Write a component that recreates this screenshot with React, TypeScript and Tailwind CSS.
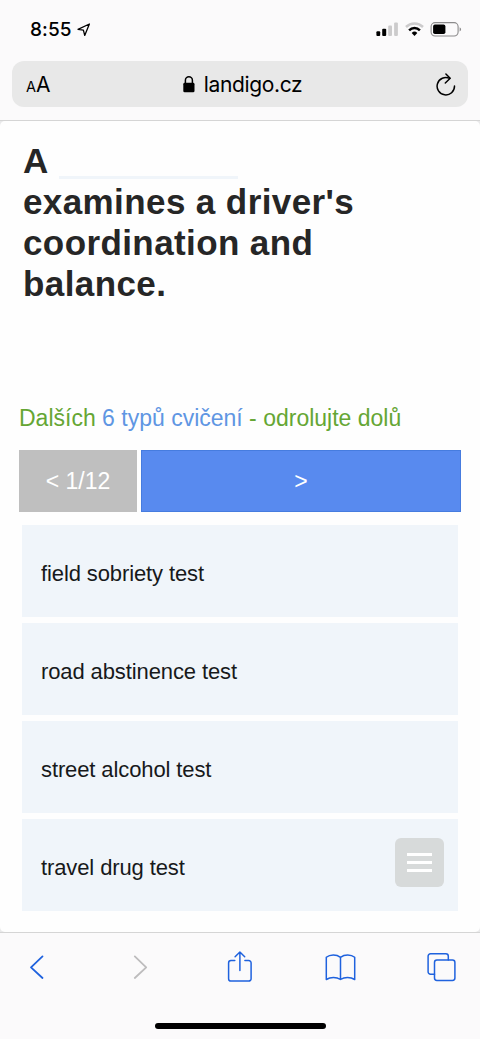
import { ReactNode } from "react";
import { clsx } from "clsx";

const answers = [
  "field sobriety test",
  "road abstinence test",
  "street alcohol test",
  "travel drug test",
];

function StatusBar() {
  return (
    <div className="flex h-[61px] items-start justify-between pl-[30px] pr-[18px] text-black">
      <div className="flex items-center pt-[18px]">
        <span className="w-[44px] text-[19px] leading-[24px] font-medium tracking-[0.1px]">
          8:55
        </span>
        <svg
          className="ml-[3px]"
          width="14"
          height="14"
          viewBox="0 0 14 14"
          fill="none"
          stroke="currentColor"
          strokeWidth="1.3"
          strokeLinejoin="round"
        >
          <path d="M12.4 1 1 6.3 6.4 7.1 7.7 12.4Z" />
        </svg>
      </div>
      <div className="flex pt-[21px]">
        <svg width="23" height="16" viewBox="0 0 23 16">
          <rect x="0.4" y="10.2" width="3.8" height="4.8" rx="1" />
          <rect x="6.2" y="7.8" width="4" height="7.2" rx="1" />
          <rect x="12.2" y="4.6" width="3.8" height="10.4" rx="1" fill="#cccbcc" />
          <rect x="18.1" y="1.6" width="3.8" height="13.4" rx="1" fill="#cccbcc" />
        </svg>
        <svg
          className="ml-[6px]"
          width="19"
          height="16"
          viewBox="0 0 19 16"
          fill="none"
          strokeWidth="2.5"
        >
          <path d="M1 6a12.2 12.2 0 0 1 17 0" stroke="#cccbcc" />
          <path d="M4.1 9.3a7.7 7.7 0 0 1 10.8 0" stroke="#000" />
          <path d="M6.7 11.9a4 4 0 0 1 5.6 0L9.5 14.9Z" fill="#000" />
        </svg>
        <svg className="ml-[6px]" width="32" height="16" viewBox="0 0 32 16" fill="none">
          <rect x="1.1" y="1.6" width="27" height="13.4" rx="4" stroke="#8b8a8b" strokeWidth="1.1" />
          <rect x="3.1" y="3.6" width="12.3" height="9.5" rx="1.8" fill="#000" />
          <path d="M29.6 6.2c2 .8 2 3.4 0 4.2Z" fill="#8b8a8b" />
        </svg>
      </div>
    </div>
  );
}

function AddressBar() {
  return (
    <div className="mx-[12px] flex h-[46px] items-center justify-between rounded-[12px] bg-[#e8e8e8] pr-[12px] pl-[14px] text-black">
      <div className="flex w-[23px] items-baseline pt-[1px] leading-none">
        <span className="text-[14.5px]">A</span>
        <span className="text-[21px]">A</span>
      </div>
      <div className="flex items-center">
        <svg width="12" height="18" viewBox="0 0 12 18">
          <rect x="0.3" y="7.8" width="11.2" height="9.5" rx="1.4" />
          <path
            d="M2.4 8.5V5.2a3.5 3.5 0 0 1 7 0V8.5"
            fill="none"
            stroke="currentColor"
            strokeWidth="1.5"
          />
        </svg>
        <span className="ml-[9px] pt-[2px] text-[21px] leading-[26px] tracking-[-0.35px]">
          landigo.cz
        </span>
      </div>
      <svg
        width="20"
        height="24"
        viewBox="0 0 20 24"
        fill="none"
        stroke="currentColor"
        strokeWidth="1.5"
        strokeLinecap="round"
        strokeLinejoin="round"
      >
        <path d="M18.5 14A8.7 8.7 0 1 1 13.6 6.4" />
        <path d="M9.9 2 14.2 6.3 9.3 11" />
      </svg>
    </div>
  );
}

function ToolIcon({
  width,
  className,
  children,
}: {
  width: number;
  className?: string;
  children: ReactNode;
}) {
  return (
    <svg
      className={clsx("shrink-0", className)}
      width={width}
      height="34"
      viewBox={`0 0 ${width} 34`}
      fill="none"
      stroke="currentColor"
      strokeWidth="1.5"
      strokeLinecap="round"
      strokeLinejoin="round"
    >
      {children}
    </svg>
  );
}

function Toolbar() {
  return (
    <div className="flex h-[107px] flex-col items-center border-t border-[#d5d5d5] bg-[#fbfafb]">
      <div className="flex w-full items-center pt-[17px] pl-[29px] text-[#1f62de]">
        <ToolIcon width={16}>
          <path d="M13.5 6.4 2 17.3 13.5 28" strokeWidth="1.8" />
        </ToolIcon>
        <ToolIcon width={16} className="ml-[87px] text-[#bdbcbd]">
          <path d="M2.8 6.4 14.2 17.3 2.8 28" strokeWidth="1.8" />
        </ToolIcon>
        <ToolIcon width={26} className="ml-[79px]">
          <path d="M7.8 10.6H4a2.4 2.4 0 0 0-2.4 2.4V28.7a2.4 2.4 0 0 0 2.4 2.4H21.7a2.4 2.4 0 0 0 2.4-2.4V13a2.4 2.4 0 0 0-2.4-2.4h-3.8" />
          <path d="M12.9 20.4V2M8.1 6.8l4.8-4.8 4.8 4.8" />
        </ToolIcon>
        <ToolIcon width={32} className="ml-[71px]">
          <path d="M16.5 7.3C12.5 4.2 6 4.2 2.3 7.3V29.5C6.500 26.800 12.500 26.800 16.500 29.500C20.500 26.800 26.500 26.800 30.700 29.500V7.300C27 4.200 20.500 4.200 16.500 7.300V29.500" />
        </ToolIcon>
        <ToolIcon width={30} className="ml-[71px]">
          <path d="M7.500 24.200H3.500a2.400 2.400 0 0 1-2.400-2.400V6.200a2.400 2.400 0 0 1 2.400-2.400H18.900a2.400 2.400 0 0 1 2.400 2.400V10" />
          <rect x="7.500" y="10" width="20.400" height="20.400" rx="2.400" />
        </ToolIcon>
      </div>
      <div className="mt-[38.5px] h-[6px] w-[171px] rounded-full bg-black" />
    </div>
  );
}

function Exercise() {
  return (
    <main className="h-[811px] overflow-hidden rounded-[5px] bg-[#fefefe] font-['Liberation_Sans',Arial,sans-serif]">
      <h1 className="h-[276px] pt-[19px] pl-[23px] text-[35px] leading-[41px] font-bold tracking-[0.4px] text-[#262626]">
        <span className="flex">
          A
          <span className="mt-[36px] ml-[10px] h-[3px] w-[179px] bg-[#f0f5fa]" />
        </span>
        <span className="block">examines a driver's</span>
        <span className="block">coordination and</span>
        <span className="block">balance.</span>
      </h1>
      <p className="h-[53px] pt-[7px] pl-[19px] text-[23px] leading-[28px] whitespace-nowrap text-[#65a634]">
        Dalších <span className="text-[#5f96e3]">6 typů cvičení</span> - odrolujte dolů
      </p>
      <div className="flex h-[62px] gap-[4px] px-[19px] text-[23px] text-white">
        <button className="w-[118px] bg-[#bfbfbf]">&lt; 1/12</button>
        <button className="flex-1 border border-[#467cdf] bg-[#588aef]">&gt;</button>
      </div>
      <ul className="mt-[13px] flex flex-col gap-[6px] px-[22px]">
        {answers.map((answer, i) => (
          <li
            key={answer}
            className="flex h-[92px] items-center justify-between bg-[#f0f5fa] pt-[5px] pr-[14px] pl-[19px] text-[22px] tracking-[-0.11px] text-[#17191b]"
          >
            {answer}
            {i === answers.length - 1 && (
              <button className="mt-[-11px] flex h-[49px] w-[49px] flex-col items-center justify-center gap-[5px] rounded-[6px] bg-[#d7dada]">
                <span className="h-[3px] w-[25px] bg-white" />
                <span className="h-[3px] w-[25px] bg-white" />
                <span className="h-[3px] w-[25px] bg-white" />
              </button>
            )}
          </li>
        ))}
      </ul>
    </main>
  );
}

export default function App() {
  return (
    <div className="h-[1039px] w-[480px] overflow-hidden bg-[#e9e9ea] font-[Inter,sans-serif]">
      <header className="h-[121px] border-b border-[#d5d5d5] bg-[#fbfafb]">
        <StatusBar />
        <AddressBar />
      </header>
      <Exercise />
      <Toolbar />
    </div>
  );
}
